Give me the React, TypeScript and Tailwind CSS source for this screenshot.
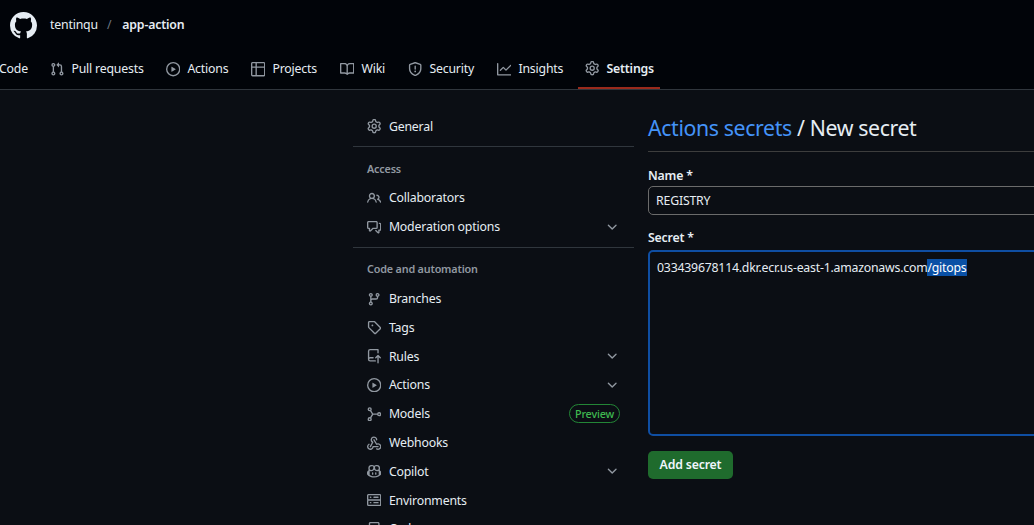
import React from 'react';

const PATHS: Record<string, string> = {
  pull: 'M1.5 3.25a2.25 2.25 0 1 1 3 2.122v5.256a2.251 2.251 0 1 1-1.5 0V5.372A2.25 2.25 0 0 1 1.5 3.25Zm5.677-.177L9.573.677A.25.25 0 0 1 10 .854V2.5h1A2.5 2.5 0 0 1 13.5 5v5.628a2.251 2.251 0 1 1-1.5 0V5a1 1 0 0 0-1-1h-1v1.646a.25.25 0 0 1-.427.177L7.177 3.427a.25.25 0 0 1 0-.354ZM3.75 2.5a.75.75 0 1 0 0 1.5.75.75 0 0 0 0-1.5Zm0 9.5a.75.75 0 1 0 0 1.5.75.75 0 0 0 0-1.5Zm8.25.75a.75.75 0 1 0 1.5 0 .75.75 0 0 0-1.5 0Z',
  play: 'M8 0a8 8 0 1 1 0 16A8 8 0 0 1 8 0ZM1.5 8a6.5 6.5 0 1 0 13 0 6.5 6.5 0 0 0-13 0Zm4.879-2.773 4.264 2.559a.25.25 0 0 1 0 .428l-4.264 2.559A.25.25 0 0 1 6 10.559V5.442a.25.25 0 0 1 .379-.215Z',
  table: 'M0 1.75C0 .784.784 0 1.75 0h12.5C15.216 0 16 .784 16 1.75v12.5A1.75 1.75 0 0 1 14.25 16H1.75A1.75 1.75 0 0 1 0 14.25ZM6.5 6.5v8h7.75a.25.25 0 0 0 .25-.25V6.5Zm8-1.5V1.75a.25.25 0 0 0-.25-.25H6.5V5Zm-13 1.5v7.75c0 .138.112.25.25.25H5v-8ZM5 5V1.5H1.75a.25.25 0 0 0-.25.25V5Z',
  book: 'M0 1.75A.75.75 0 0 1 .75 1h4.253c1.227 0 2.317.59 3 1.501A3.743 3.743 0 0 1 11.006 1h4.245a.75.75 0 0 1 .75.75v10.5a.75.75 0 0 1-.75.75h-4.507a2.25 2.25 0 0 0-1.591.659l-.622.621a.75.75 0 0 1-1.06 0l-.622-.621A2.25 2.25 0 0 0 5.258 13H.75a.75.75 0 0 1-.75-.75Zm7.251 10.324.004-5.073-.002-2.253A2.25 2.25 0 0 0 5.003 2.5H1.5v9h3.757a3.75 3.75 0 0 1 1.994.574ZM8.755 4.75l-.004 7.322a3.752 3.752 0 0 1 1.992-.572H14.5v-9h-3.495a2.25 2.25 0 0 0-2.25 2.25Z',
  shield: 'M7.467.133a1.748 1.748 0 0 1 1.066 0l5.25 1.68A1.75 1.75 0 0 1 15 3.48V7c0 1.566-.32 3.182-1.303 4.682-.983 1.498-2.585 2.813-5.032 3.855a1.697 1.697 0 0 1-1.33 0c-2.447-1.042-4.049-2.357-5.032-3.855C1.32 10.182 1 8.566 1 7V3.48a1.75 1.75 0 0 1 1.217-1.667Zm.61 1.429a.25.25 0 0 0-.153 0l-5.25 1.68a.25.25 0 0 0-.174.238V7c0 1.358.275 2.666 1.057 3.86.784 1.194 2.121 2.34 4.366 3.297a.196.196 0 0 0 .154 0c2.245-.956 3.582-2.104 4.366-3.298C13.225 9.666 13.5 8.36 13.5 7V3.48a.251.251 0 0 0-.174-.237l-5.25-1.68ZM8.75 4.75v3a.75.75 0 0 1-1.5 0v-3a.75.75 0 0 1 1.5 0ZM9 10.5a1 1 0 1 1-2 0 1 1 0 0 1 2 0Z',
  graph: 'M1.5 1.75V13.5h13.75a.75.75 0 0 1 0 1.5H.75a.75.75 0 0 1-.75-.75V1.75a.75.75 0 0 1 1.5 0Zm14.28 2.53-5.25 5.25a.75.75 0 0 1-1.06 0L7 7.06 4.28 9.78a.751.751 0 0 1-1.042-.018.751.751 0 0 1-.018-1.042l3.25-3.25a.75.75 0 0 1 1.06 0L10 7.94l4.72-4.72a.751.751 0 0 1 1.042.018.751.751 0 0 1 .018 1.042Z',
  gear: 'M8 0a8.2 8.2 0 0 1 .701.031C9.444.095 9.99.645 10.16 1.29l.288 1.107c.018.066.079.158.212.224.231.114.454.243.668.386.123.082.233.09.299.071l1.103-.303c.644-.176 1.392.021 1.82.63.27.385.506.792.704 1.218.315.675.111 1.422-.364 1.891l-.814.806c-.049.048-.098.147-.088.294.016.257.016.515 0 .772-.01.147.038.246.088.294l.814.806c.475.469.679 1.216.364 1.891a7.977 7.977 0 0 1-.704 1.217c-.428.61-1.176.807-1.82.63l-1.102-.302c-.067-.019-.177-.011-.3.071a5.909 5.909 0 0 1-.668.386c-.133.066-.194.158-.211.224l-.29 1.106c-.168.646-.715 1.196-1.458 1.26a8.006 8.006 0 0 1-1.402 0c-.743-.064-1.289-.614-1.458-1.26l-.289-1.106c-.018-.066-.079-.158-.212-.224a5.738 5.738 0 0 1-.668-.386c-.123-.082-.233-.09-.299-.071l-1.103.303c-.644.176-1.392-.021-1.82-.63a8.12 8.12 0 0 1-.704-1.218c-.315-.675-.111-1.422.363-1.891l.815-.806c.05-.048.098-.147.088-.294a6.214 6.214 0 0 1 0-.772c.01-.147-.038-.246-.088-.294l-.815-.806C.635 6.045.431 5.298.746 4.623a7.92 7.92 0 0 1 .704-1.217c.428-.61 1.176-.807 1.82-.63l1.102.302c.067.019.177.011.3-.071.214-.143.437-.272.668-.386.133-.066.194-.158.211-.224l.29-1.106C6.009.645 6.556.095 7.299.03 7.53.01 7.764 0 8 0Zm-.571 1.525c-.036.003-.108.036-.137.146l-.289 1.105c-.147.561-.549.967-.998 1.189-.173.086-.34.183-.5.29-.417.278-.97.423-1.529.27l-1.103-.303c-.109-.03-.175.016-.195.045-.22.312-.412.644-.573.99-.014.031-.021.11.059.19l.815.806c.411.406.562.957.53 1.456a4.709 4.709 0 0 0 0 .582c.032.499-.119 1.05-.53 1.456l-.815.806c-.081.08-.073.159-.059.19.162.346.353.677.573.989.02.03.085.076.195.046l1.102-.303c.56-.153 1.113-.008 1.53.27.161.107.328.204.501.29.447.222.85.629.997 1.189l.289 1.105c.029.109.101.143.137.146a6.6 6.6 0 0 0 1.142 0c.036-.003.108-.036.137-.146l.289-1.105c.147-.561.549-.967.998-1.189.173-.086.34-.183.5-.29.417-.278.97-.423 1.529-.27l1.103.303c.109.029.175-.016.195-.045.22-.313.411-.644.573-.99.014-.031.021-.11-.059-.19l-.815-.806c-.411-.406-.562-.957-.53-1.456a4.709 4.709 0 0 0 0-.582c-.032-.499.119-1.05.53-1.456l.815-.806c.081-.08.073-.159.059-.19a6.464 6.464 0 0 0-.573-.989c-.02-.03-.085-.076-.195-.046l-1.102.303c-.56.153-1.113.008-1.53-.27a4.44 4.44 0 0 0-.501-.29c-.447-.222-.85-.629-.997-1.189l-.289-1.105c-.029-.11-.101-.143-.137-.146a6.6 6.6 0 0 0-1.142 0ZM11 8a3 3 0 1 1-6 0 3 3 0 0 1 6 0ZM9.5 8a1.5 1.5 0 1 0-3.001.001A1.5 1.5 0 0 0 9.5 8Z',
  people: 'M2 5.5a3.5 3.5 0 1 1 5.898 2.549 5.508 5.508 0 0 1 3.034 4.084.75.75 0 1 1-1.482.235 4 4 0 0 0-7.9 0 .75.75 0 0 1-1.482-.236A5.507 5.507 0 0 1 3.102 8.05 3.493 3.493 0 0 1 2 5.5ZM11 4a3.001 3.001 0 0 1 2.22 5.018 5.01 5.01 0 0 1 2.56 3.012.749.749 0 0 1-.885.954.752.752 0 0 1-.549-.514 3.507 3.507 0 0 0-2.522-2.372.75.75 0 0 1-.574-.73v-.352a.75.75 0 0 1 .416-.672A1.5 1.5 0 0 0 11 5.5.75.75 0 0 1 11 4Zm-5.5-.5a2 2 0 1 0-.001 3.999A2 2 0 0 0 5.5 3.5Z',
  comments: 'M1.75 1h8.5c.966 0 1.75.784 1.75 1.75v5.5A1.75 1.75 0 0 1 10.25 10H7.061l-2.574 2.573A1.458 1.458 0 0 1 2 11.543V10h-.25A1.75 1.75 0 0 1 0 8.25v-5.5C0 1.784.784 1 1.75 1ZM1.5 2.75v5.5c0 .138.112.25.25.25h1a.75.75 0 0 1 .75.75v2.19l2.72-2.72a.749.749 0 0 1 .53-.22h3.5a.25.25 0 0 0 .25-.25v-5.5a.25.25 0 0 0-.25-.25h-8.5a.25.25 0 0 0-.25.25Zm13 2a.25.25 0 0 0-.25-.25h-.5a.75.75 0 0 1 0-1.5h.5c.966 0 1.75.784 1.75 1.75v5.5A1.75 1.75 0 0 1 14.25 12H14v1.543a1.458 1.458 0 0 1-2.487 1.03L9.22 12.28a.749.749 0 0 1 .326-1.275.749.749 0 0 1 .734.215l2.22 2.22v-2.19a.75.75 0 0 1 .75-.75h1a.25.25 0 0 0 .25-.25Z',
  branch: 'M9.5 3.25a2.25 2.25 0 1 1 3 2.122V6A2.5 2.5 0 0 1 10 8.5H6a1 1 0 0 0-1 1v1.128a2.251 2.251 0 1 1-1.5 0V5.372a2.25 2.25 0 1 1 1.5 0v1.836A2.493 2.493 0 0 1 6 7h4a1 1 0 0 0 1-1v-.628A2.25 2.25 0 0 1 9.5 3.25Zm-6 0a.75.75 0 1 0 1.5 0 .75.75 0 0 0-1.5 0Zm8.25-.75a.75.75 0 1 0 0 1.5.75.75 0 0 0 0-1.5ZM4.25 12a.75.75 0 1 0 0 1.5.75.75 0 0 0 0-1.5Z',
  tag: 'M1 7.775V2.75C1 1.784 1.784 1 2.75 1h5.025c.464 0 .91.184 1.238.513l6.25 6.25a1.75 1.75 0 0 1 0 2.474l-5.026 5.026a1.75 1.75 0 0 1-2.474 0l-6.25-6.25A1.75 1.75 0 0 1 1 7.775Zm1.5 0c0 .066.026.13.073.177l6.25 6.25a.25.25 0 0 0 .354 0l5.025-5.025a.25.25 0 0 0 0-.354l-6.25-6.25a.25.25 0 0 0-.177-.073H2.75a.25.25 0 0 0-.25.25ZM6 5a1 1 0 1 1 0 2 1 1 0 0 1 0-2Z',
  rules: 'M1 2.5A2.5 2.5 0 0 1 3.5 0h8.75a.75.75 0 0 1 .75.75v3.5a.75.75 0 0 1-1.5 0V1.5h-8a1 1 0 0 0-1 1v6.708A2.493 2.493 0 0 1 3.5 9h3.25a.75.75 0 0 1 0 1.5H3.5a1 1 0 0 0 0 2h5.75a.75.75 0 0 1 0 1.5H3.5A2.5 2.5 0 0 1 1 11.5Zm13.23 7.79h-.001l-1.224-1.224v6.184a.75.75 0 0 1-1.5 0V9.066L10.28 10.29a.75.75 0 0 1-1.06-1.061l2.505-2.504a.75.75 0 0 1 1.06 0L15.29 9.23a.751.751 0 0 1-.018 1.042.751.751 0 0 1-1.042.018Z',
  webhook: 'M5.5 4.25a2.25 2.25 0 0 1 4.5 0 .75.75 0 0 0 1.5 0 3.75 3.75 0 1 0-6.14 2.889l-2.272 4.258a.75.75 0 0 0 1.324.706L7 7.25a.75.75 0 0 0-.309-1.015A2.25 2.25 0 0 1 5.5 4.25Z M7.364 3.607a.75.75 0 0 1 1.03.257l2.608 4.349a3.75 3.75 0 1 1-.628 6.785.75.75 0 0 1 .752-1.299 2.25 2.25 0 1 0-.033-3.88.75.75 0 0 1-1.03-.256L7.107 4.636a.75.75 0 0 1 .257-1.03Z M2.9 8.776A.75.75 0 0 1 2.625 9.8 2.25 2.25 0 1 0 6 11.75a.75.75 0 0 1 .75-.751h5.5a.75.75 0 0 1 0 1.5H7.425a3.751 3.751 0 1 1-5.55-3.998.75.75 0 0 1 1.024.274Z',
  copilot: 'M7.998 15.035c-4.562 0-7.873-2.914-7.998-3.749V9.338c.085-.628.677-1.686 1.588-2.065.013-.07.024-.143.036-.218.029-.183.06-.384.126-.612-.201-.508-.254-1.084-.254-1.656 0-.87.128-1.769.693-2.484.579-.733 1.494-1.124 2.724-1.261 1.206-.134 2.262.034 2.944.765.05.053.096.108.139.165.044-.057.094-.112.143-.165.682-.731 1.738-.899 2.944-.765 1.23.137 2.145.528 2.724 1.261.566.715.693 1.614.693 2.484 0 .572-.053 1.148-.254 1.656.066.228.098.429.126.612.012.076.024.148.037.218.924.385 1.522 1.471 1.591 2.095v1.872c0 .766-3.351 3.795-8.002 3.795Zm0-1.485c2.28 0 4.584-1.11 5.002-1.433V7.862l-.023-.116c-.49.21-1.075.291-1.727.291-1.146 0-2.059-.327-2.71-.991A3.222 3.222 0 0 1 8 6.303a3.24 3.24 0 0 1-.544.743c-.65.664-1.563.991-2.71.991-.652 0-1.236-.081-1.727-.291l-.023.116v4.255c.419.323 2.722 1.433 5.002 1.433ZM6.762 2.83c-.193-.206-.637-.413-1.682-.297-1.019.113-1.479.404-1.713.7-.247.312-.369.789-.369 1.554 0 .793.129 1.171.308 1.371.162.181.519.379 1.442.379.853 0 1.339-.235 1.638-.54.315-.322.527-.827.617-1.553.117-.935-.037-1.395-.241-1.614Zm4.155-.297c-1.044-.116-1.488.091-1.681.297-.204.219-.359.679-.242 1.614.091.726.303 1.231.618 1.553.299.305.784.54 1.638.54.922 0 1.28-.198 1.442-.379.179-.2.308-.578.308-1.371 0-.765-.123-1.242-.37-1.554-.233-.296-.693-.587-1.713-.7Z M6.25 9.037a.75.75 0 0 1 .75.75v1.501a.75.75 0 0 1-1.5 0V9.787a.75.75 0 0 1 .75-.75Zm4.25.75v1.501a.75.75 0 0 1-1.5 0V9.787a.75.75 0 0 1 1.5 0Z',
  server: 'M1.75 1h12.5c.966 0 1.75.784 1.75 1.75v4c0 .372-.116.717-.314 1 .198.283.314.628.314 1v4a1.75 1.75 0 0 1-1.75 1.75H1.75A1.75 1.75 0 0 1 0 12.75v-4c0-.358.109-.707.314-1a1.739 1.739 0 0 1-.314-1v-4C0 1.784.784 1 1.75 1ZM1.5 2.75v4c0 .138.112.25.25.25h12.5a.25.25 0 0 0 .25-.25v-4a.25.25 0 0 0-.25-.25H1.75a.25.25 0 0 0-.25.25Zm.25 5.75a.25.25 0 0 0-.25.25v4c0 .138.112.25.25.25h12.5a.25.25 0 0 0 .25-.25v-4a.25.25 0 0 0-.25-.25ZM7 4.75A.75.75 0 0 1 7.75 4h4.5a.75.75 0 0 1 0 1.5h-4.5A.75.75 0 0 1 7 4.75ZM7.75 10h4.5a.75.75 0 0 1 0 1.5h-4.5a.75.75 0 0 1 0-1.5ZM3 4.75A.75.75 0 0 1 3.75 4h.5a.75.75 0 0 1 0 1.5h-.5A.75.75 0 0 1 3 4.75ZM3.75 10h.5a.75.75 0 0 1 0 1.5h-.5a.75.75 0 0 1 0-1.5Z',
  codespaces: 'M0 11.25c0-.966.784-1.75 1.75-1.75h12.5c.966 0 1.75.784 1.75 1.75v3A1.75 1.75 0 0 1 14.25 16H1.75A1.75 1.75 0 0 1 0 14.25Zm2-9.5C2 .784 2.784 0 3.75 0h8.5C13.216 0 14 .784 14 1.75v5a1.75 1.75 0 0 1-1.75 1.75h-8.5A1.75 1.75 0 0 1 2 6.75Zm1.75-.25a.25.25 0 0 0-.25.25v5c0 .138.112.25.25.25h8.5a.25.25 0 0 0 .25-.25v-5a.25.25 0 0 0-.25-.25Zm-2 9.5a.25.25 0 0 0-.25.25v3c0 .138.112.25.25.25h12.5a.25.25 0 0 0 .25-.25v-3a.25.25 0 0 0-.25-.25Z',
  github: 'M8 0c4.42 0 8 3.58 8 8a8.013 8.013 0 0 1-5.45 7.59c-.4.08-.55-.17-.55-.38 0-.27.01-1.13.01-2.2 0-.75-.25-1.23-.54-1.48 1.78-.2 3.65-.88 3.65-3.95 0-.88-.31-1.59-.82-2.15.08-.2.36-1.02-.08-2.12 0 0-.67-.22-2.2.82-.64-.18-1.32-.27-2-.27-.68 0-1.36.09-2 .27-1.53-1.03-2.2-.82-2.2-.82-.44 1.1-.16 1.92-.08 2.12-.51.56-.82 1.28-.82 2.15 0 3.06 1.86 3.75 3.64 3.95-.23.2-.44.55-.51 1.07-.46.21-1.61.55-2.33-.66-.15-.24-.6-.83-1.23-.82-.67.01-.27.38.01.53.34.19.73.9.82 1.13.16.45.68 1.31 2.69.94 0 .67.01 1.3.01 1.49 0 .21-.15.45-.55.38A7.995 7.995 0 0 1 0 8c0-4.42 3.58-8 8-8Z',
};

const Icon = ({ name, className = 'w-[14.4px] h-[14.4px] text-[#9198a1]' }: { name: string; className?: string }) => (
  <svg viewBox="0 0 16 16" fill="currentColor" className={`shrink-0 ${className}`}>
    <path d={PATHS[name]} />
  </svg>
);

// the models icon has no solid path, three nodes joined in the middle
const ModelsIcon = () => (
  <svg viewBox="0 0 16 16" fill="none" stroke="currentColor" strokeWidth="1.5" className="w-[14.4px] h-[14.4px] shrink-0 text-[#9198a1]">
    <circle cx="3" cy="2.5" r="1.6" />
    <circle cx="3" cy="13.5" r="1.6" />
    <circle cx="13.5" cy="8" r="1.6" />
    <path d="M3.9 4 L6.4 8 L3.9 12 M6.4 8 H11.9" />
  </svg>
);

const Chevron = () => (
  <svg viewBox="0 0 16 16" fill="currentColor" className="w-[14.4px] h-[14.4px] text-[#9198a1] -translate-x-[1px]">
    <path d="M12.78 5.22a.749.749 0 0 1 0 1.06l-4.25 4.25a.749.749 0 0 1-1.06 0L3.22 6.28a.749.749 0 1 1 1.06-1.06L8 8.939l3.72-3.719a.749.749 0 0 1 1.06 0Z" />
  </svg>
);

const tabs = [
  { label: 'Pull requests', icon: 'pull', width: 'w-[116px]' },
  { label: 'Actions', icon: 'play', width: 'w-[85px]' },
  { label: 'Projects', icon: 'table', width: 'w-[89px]' },
  { label: 'Wiki', icon: 'book', width: 'w-[68px]' },
  { label: 'Security', icon: 'shield', width: 'w-[89px]' },
  { label: 'Insights', icon: 'graph', width: 'w-[88px]' },
];

const SideRow = ({ icon, label, chevron, custom }: { icon?: string; label: string; chevron?: boolean; custom?: React.ReactNode }) => (
  <div className="h-[28.8px] flex items-center pl-[14px] pr-[14px] gap-[7.5px] text-[#e6edf3] shrink-0">
    {custom ?? <Icon name={icon as string} />}
    <span className="flex-1 pt-[1px]">{label}</span>
    {chevron && <Chevron />}
  </div>
);

export default function App() {
  return (
    <div className="w-[1034px] h-[525px] overflow-hidden bg-[#0b0e14] text-[12.3px] tracking-[-0.18px] text-[#e6edf3] font-['Noto_Sans',sans-serif]">
      <header className="h-[90px] bg-[#010409] border-b border-[#30363d] flex flex-col">
        <div className="h-[50px] flex items-center pl-[10px]">
          <Icon name="github" className="w-[27px] h-[27px] text-[#e6edf3]" />
          <span className="ml-[13px] pt-[1px]">tentinqu</span>
          <span className="ml-[9px] pt-[1px] text-[#6e7681]">/</span>
          <span className="ml-[11px] pt-[1px] font-semibold">app-action</span>
        </div>
        <nav className="h-[39px] flex">
          <div className="w-[42px] flex items-center -translate-x-[1px]">Code</div>
          {tabs.map(t => (
            <div key={t.label} className={`${t.width} flex items-center pl-[8px] gap-[7px]`}>
              <Icon name={t.icon} />
              <span>{t.label}</span>
            </div>
          ))}
          <div className="w-[82px] ml-[1px] flex items-center pl-[7px] gap-[7px] font-semibold border-b-2 border-[#9a2a1c]">
            <Icon name="gear" />
            <span className="pt-[1px]">Settings</span>
          </div>
        </nav>
      </header>

      <div className="flex pl-[353px]">
        <aside className="w-[281px] shrink-0 pt-[22px] flex flex-col">
          <SideRow icon="gear" label="General" />
          <div className="h-px bg-[#30363d] mt-[5px]" />
          <div className="h-[29px] mt-[8px] flex items-center pl-[14px] text-[10.8px] font-semibold text-[#9198a1]">Access</div>
          <SideRow icon="people" label="Collaborators" />
          <SideRow icon="comments" label="Moderation options" chevron />
          <div className="h-px bg-[#30363d] mt-[6px]" />
          <div className="h-[29px] mt-[6px] flex items-center pl-[14px] text-[10.8px] font-semibold text-[#9198a1]">Code and automation</div>
          <div className="flex flex-col mt-[1px]">
            <SideRow icon="branch" label="Branches" />
            <SideRow icon="tag" label="Tags" />
            <SideRow icon="rules" label="Rules" chevron />
            <SideRow icon="play" label="Actions" chevron />
            <div className="h-[28.8px] flex items-center pl-[14px] pr-[14px] gap-[7.5px] shrink-0">
              <ModelsIcon />
              <span className="flex-1 pt-[1px]">Models</span>
              <span className="h-[19px] px-[5px] rounded-full border border-[#238636] text-[#3fb950] text-[10.8px] font-medium flex items-center">Preview</span>
            </div>
            <SideRow icon="webhook" label="Webhooks" />
            <SideRow icon="copilot" label="Copilot" chevron />
            <SideRow icon="server" label="Environments" />
            <SideRow icon="codespaces" label="Codespaces" />
          </div>
        </aside>

        <main className="w-[600px] shrink-0 ml-[14px] pt-[22px]">
          <div className="h-[40px] border-b border-[#3d3d3d] text-[21.3px] tracking-[-0.38px] leading-[32px]">
            <span className="text-[#4493f8]">Actions secrets</span> / New secret
          </div>
          <div className="mt-[15px] font-semibold leading-[18px]">Name *</div>
          <div className="mt-[1px] h-[29px] border border-[#6b6b6b] rounded-[5px] px-[7px] flex items-center pt-[1px]">REGISTRY</div>
          <div className="mt-[14px] font-semibold leading-[18px]">Secret *</div>
          <div className="mt-[3px] h-[186px] border-2 border-[#0f4ea3] rounded-[5px] pl-[7px] pt-[6px] leading-[20px] tracking-[-0.22px]">
            033439678114.dkr.ecr.us-east-1.amazonaws.com<span className="bg-[#0a50a5] text-white">/gitops</span>
          </div>
          <button className="mt-[15px] h-[28px] w-[85px] rounded-[5px] bg-[#1f6b2d] font-semibold text-[#f0f6fc] text-center pt-[1px]">Add secret</button>
        </main>
      </div>
    </div>
  );
}
